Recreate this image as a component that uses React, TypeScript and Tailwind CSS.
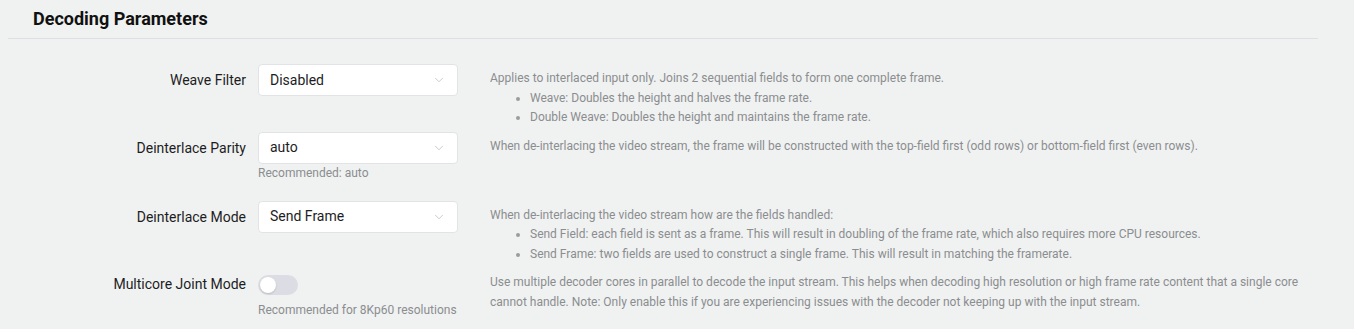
import { ChevronDown } from "lucide-react";

function Select({ value }: { value: string }) {
  return (
    <div className="flex h-8 w-[200px] items-center justify-between rounded-[4px] border border-[#e1e3e6] bg-white pl-[11px] pr-[11px] text-[14px] text-[#1d1d1f]">
      <span>{value}</span>
      <ChevronDown className="h-[14px] w-[14px] text-[#b4b6ba]" strokeWidth={1.2} />
    </div>
  );
}

function Label({ children }: { children: string }) {
  return (
    <div className="w-[238px] shrink-0 text-right text-[14px] leading-8 text-[#1d1d1f]">
      {children}
    </div>
  );
}

export default function App() {
  return (
    <div
      className="min-h-screen bg-[#f0f2f1] pl-2"
      style={{ fontFamily: "Roboto, 'Liberation Sans', sans-serif" }}
    >
      <div className="w-[1310px]">
        {/* Header */}
        <div className="flex h-[39px] items-center border-b border-[#dedfe5] pb-[2px] pl-[25px]">
          <h2 className="text-[18px] font-bold text-[#111]">Decoding Parameters</h2>
        </div>

        {/* Weave Filter */}
        <div className="mt-[25px] flex items-start">
          <Label>Weave Filter</Label>
          <div className="ml-3 shrink-0">
            <Select value="Disabled" />
          </div>
          <div className="ml-8 flex-1 pt-[5px] text-[12px] leading-[19.5px] text-[#8b8d90]">
            <p>Applies to interlaced input only. Joins 2 sequential fields to form one complete frame.</p>
            <ul className="list-disc pl-10 marker:text-[#9a9c9f]">
              <li>Weave: Doubles the height and halves the frame rate.</li>
              <li>Double Weave: Doubles the height and maintains the frame rate.</li>
            </ul>
          </div>
        </div>

        {/* Deinterlace Parity */}
        <div className="mt-[4px] flex items-start">
          <Label>Deinterlace Parity</Label>
          <div className="ml-3 shrink-0">
            <Select value="auto" />
            <p className="mt-[1px] text-[12px] leading-4 text-[#8b8d90]">Recommended: auto</p>
          </div>
          <div className="ml-8 flex-1 pt-[5px] text-[12px] leading-[19.5px] text-[#8b8d90]">
            <p>
              When de-interlacing the video stream, the frame will be constructed with the top-field first (odd rows) or
              bottom-field first (even rows).
            </p>
          </div>
        </div>

        {/* Deinterlace Mode */}
        <div className="mt-[20px] flex items-start">
          <Label>Deinterlace Mode</Label>
          <div className="ml-3 shrink-0">
            <Select value="Send Frame" />
          </div>
          <div className="ml-8 flex-1 pt-[5px] text-[12px] leading-[19.5px] text-[#8b8d90]">
            <p>When de-interlacing the video stream how are the fields handled:</p>
            <ul className="list-disc pl-10 marker:text-[#9a9c9f]">
              <li>
                Send Field: each field is sent as a frame. This will result in doubling of the frame rate, which also
                requires more CPU resources.
              </li>
              <li>
                Send Frame: two fields are used to construct a single frame. This will result in matching the framerate.
              </li>
            </ul>
          </div>
        </div>

        {/* Multicore Joint Mode */}
        <div className="mt-[4px] flex items-start">
          <Label>Multicore Joint Mode</Label>
          <div className="ml-3 w-[200px] shrink-0">
            <div className="flex h-8 items-center pt-[2px]">
              <div className="flex h-[20px] w-[40px] items-center rounded-full bg-[#dcdde4] px-[2px]">
                <div className="h-[16px] w-[16px] rounded-full bg-white shadow-[0_1px_2px_rgba(0,0,0,0.15)]" />
              </div>
            </div>
            <p className="mt-[2px] text-[12px] leading-4 text-[#8b8d90]">Recommended for 8Kp60 resolutions</p>
          </div>
          <div className="ml-8 flex-1 pt-[5px] text-[12px] leading-[19.5px] text-[#8b8d90]">
            <p>
              Use multiple decoder cores in parallel to decode the input stream. This helps when decoding high
              resolution or high frame rate content that a single core cannot handle. Note: Only enable this if you are
              experiencing issues with the decoder not keeping up with the input stream.
            </p>
          </div>
        </div>
      </div>
    </div>
  );
}
